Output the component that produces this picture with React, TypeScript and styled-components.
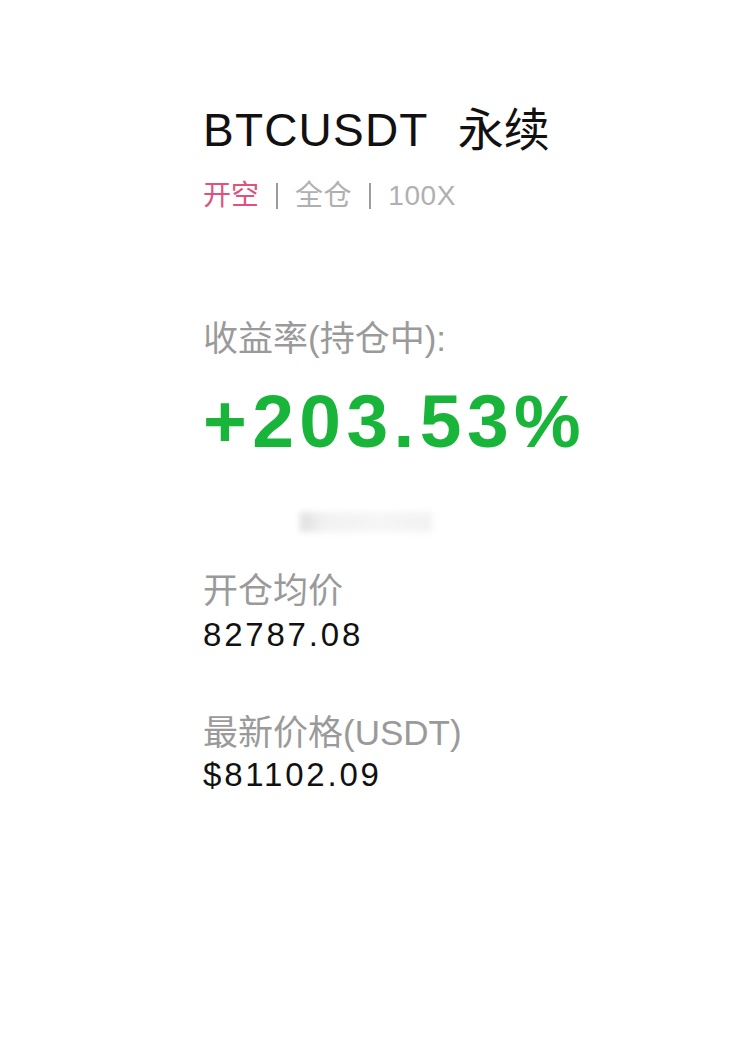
import React from 'react';
import styled, {createGlobalStyle} from 'styled-components';

const GlobalStyle = createGlobalStyle`
    html, body {
        margin: 0;
        padding: 0;
        background: #ffffff;
    }
    body {
        font-family: "Liberation Sans", "Noto Sans CJK SC", sans-serif;
    }
`

const Page = styled.div`
    min-height: 1042px;
    display: flex;
    flex-direction: column;
    align-items: flex-start;
    padding: 102px 0 0 203px;
    box-sizing: border-box;
    background: #ffffff;
`

const Title = styled.div`
    display: flex;
    align-items: baseline;
    font-size: 46px;
    line-height: 56px;
    color: #111111;
`

const Symbol = styled.span`
    letter-spacing: 1.2px;
`

const Kind = styled.span`
    margin-left: 29px;
`

const Tags = styled.div`
    display: flex;
    align-items: center;
    height: 32px;
    margin-top: 22px;
    font-size: 28px;
    line-height: 32px;
`

const Tag = styled.span<{accent?: boolean}>`
    color: ${props => props.accent ? '#e0517e' : '#b0b0b0'};
    letter-spacing: ${props => props.accent ? '0' : '0.6px'};
`

const Divider = styled.span`
    width: 2px;
    height: 26px;
    margin: 0 17px;
    background: #9c9c9c;
`

const Label = styled.div<{gap: number}>`
    margin-top: ${props => props.gap}px;
    font-size: 35px;
    line-height: 44px;
    color: #9a9a9a;
`

const Yield = styled.div`
    margin-top: 15px;
    font-size: 75px;
    line-height: 90px;
    font-weight: 700;
    letter-spacing: 5.4px;
    color: #19b53b;
`

const Smudge = styled.div`
    margin: 46px 0 0 97px;
    width: 132px;
    height: 20px;
    background: linear-gradient(90deg, #d6d6d6 0%, #ededed 18%, #f3f3f3 60%, #eeeeee 100%);
    filter: blur(3px);
    opacity: 0.75;
`

const Value = styled.div<{gap: number}>`
    margin-top: ${props => props.gap}px;
    font-size: 33px;
    line-height: 40px;
    letter-spacing: 2.8px;
    color: #111111;
`

const App = () => {
    return (
        <Page>
            <GlobalStyle/>
            <Title>
                <Symbol>BTCUSDT</Symbol>
                <Kind>永续</Kind>
            </Title>
            <Tags>
                <Tag accent>开空</Tag>
                <Divider/>
                <Tag>全仓</Tag>
                <Divider/>
                <Tag>100X</Tag>
            </Tags>
            <Label gap={105}>收益率(持仓中):</Label>
            <Yield>+203.53%</Yield>
            <Smudge/>
            <Label gap={37}>开仓均价</Label>
            <Value gap={2}>82787.08</Value>
            <Label gap={56}>最新价格(USDT)</Label>
            <Value gap={0}>$81102.09</Value>
        </Page>
    )
};

export default App;
